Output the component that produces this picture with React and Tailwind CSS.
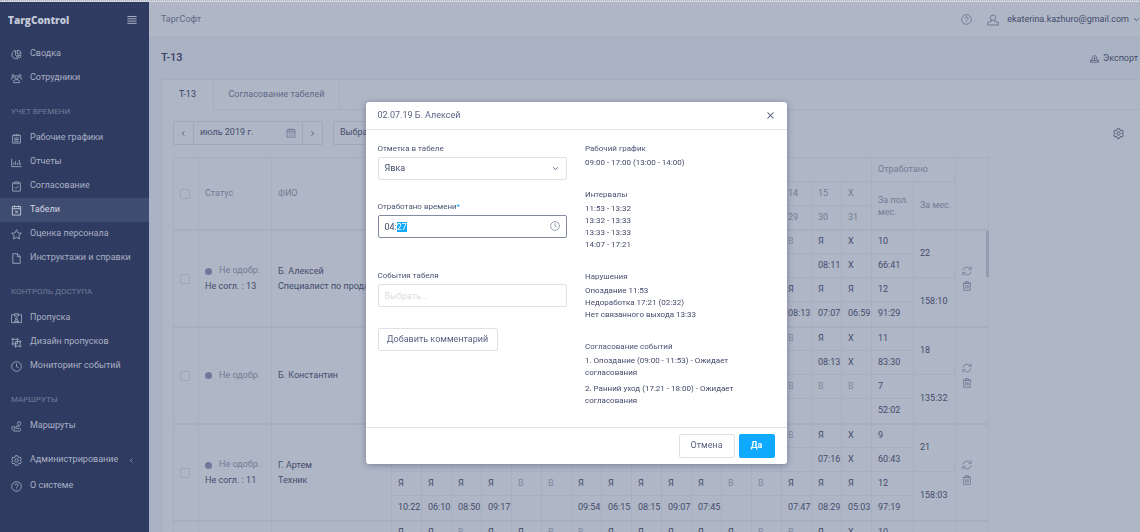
import { useEffect, useRef } from "react";

const ICONS = {
  pie: (
    <>
      <path d="M10 3.500a9 9 0 1 0 5 17" />
      <path d="M10 3.500V13l5 7.500" />
      <path d="M13.500 2.500a8.500 8.500 0 0 1 8.500 8h-8.500z" />
      <path d="M14 14h8a8 8 0 0 1-3.500 6z" />
    </>
  ),
  people: (
    <>
      <circle cx="12" cy="9" r="3.500" />
      <path d="M5.500 21v-2a5 5 0 0 1 5-4.500h3a5 5 0 0 1 5 4.500v2z" />
      <circle cx="4.500" cy="6" r="2.500" />
      <circle cx="19.500" cy="6" r="2.500" />
      <path d="M0 16v-2a4 4 0 0 1 5-3.500M24 16v-2a4 4 0 0 0-5-3.500" />
    </>
  ),
  schedule: (
    <>
      <path d="M3.500 5h17v17h-17z" />
      <path d="M8 2v5M12 2v5M16 2v5M7 11h10M7 14.500h10M7 18h10" />
    </>
  ),
  chart: (
    <>
      <path d="M1.500 4v17H23" />
      <path d="M6 17v-5M10 17V9M14 17v-4M18 17V6M21 17v-3" />
    </>
  ),
  clipboard: (
    <>
      <path d="M8 4H3.500v18h17V4H16" />
      <path d="M8 2h8v4H8zM8 13.500l3 3 5.500-6" />
    </>
  ),
  calendarX: (
    <>
      <path d="M3 3.500h18v18.500H3zM3 8h18" />
      <path d="M7.500 1v4M16.500 1v4M9 12l6 6M15 12l-6 6" />
    </>
  ),
  star: <path d="M12 1.500l3.200 6.900 7.300.9-5.400 5.100 1.400 7.400L12 18.100l-6.500 3.700 1.400-7.400L1.500 9.300l7.300-.9z" />,
  file: <path d="M14.500 1.500H4v21h16V7.500zM14 2v6h6" />,
  badge: (
    <>
      <path d="M8 4H1v17h22V4h-7" />
      <path d="M8 1.500h8v5H8z" />
      <circle cx="12" cy="12" r="2.200" />
      <path d="M7.500 18.500c.5-5 8.500-5 9 0z" />
    </>
  ),
  design: (
    <>
      <path d="M4 5h10v10H4zM10 10h10v10H10z" />
      <path d="M1 5h3M4 2v3M14 2v3h3M1 15h3v3M20 7v3h3M7 20h3v3M20 23v-3h3" />
    </>
  ),
  clock: (
    <>
      <circle cx="12" cy="12" r="10.500" />
      <path d="M12 5.500V12l4.500 3" />
    </>
  ),
  route: (
    <>
      <path d="M18 11s-3.500-3.500-3.500-6a3.500 3.500 0 0 1 7 0c0 2.500-3.500 6-3.500 6z" />
      <path d="M5 21s-3.500-3-3.500-5.500a3.500 3.500 0 0 1 7 0C8.500 18 5 21 5 21z" />
      <path d="M18 11h-5a2.300 2.300 0 0 0 0 5h6a3.300 3.300 0 0 1 0 6H6" />
    </>
  ),
  gear: (
    <>
      <path d="M9.500 1.500h5l.8 3 2 1.200 3-.9 2.300 4-2.100 2.200v2l2.100 2.200-2.300 4-3-.9-2 1.200-.8 3h-5l-.8-3-2-1.200-3 .9-2.300-4L3.500 13v-2L1.400 8.800l2.300-4 3 .9 2-1.200z" />
      <circle cx="12" cy="12" r="3.700" />
    </>
  ),
  help: (
    <>
      <circle cx="12" cy="12" r="10.500" />
      <path d="M8.800 9.300a3.200 3.200 0 1 1 4.700 2.900c-1 .6-1.500 1.100-1.500 2.300M12 16.800v1.700" />
    </>
  ),
  user: (
    <>
      <circle cx="12" cy="7.500" r="5.500" />
      <path d="M8.500 12v2.500L1.500 17v5h21v-5l-7-2.500V12" />
    </>
  ),
  exportIcon: (
    <>
      <path d="M6.500 13a6 6 0 1 1 11 0" />
      <path d="M12 7v8M9.500 12.500l2.500 2.500 2.500-2.500M6 13l-4.500 4v5h21v-5L18 13M2 17.500h20" />
    </>
  ),
  calendar: (
    <>
      <path d="M2.500 4h19v18h-19zM2.500 9h19" />
      <path d="M7 1v5M12 1v5M17 1v5M7 12.500h2.500M11 12.500h2.500M15 12.500h2.500M7 17h2.500M11 17h2.500M15 17h2.500" />
    </>
  ),
  refresh: (
    <>
      <path d="M2.500 10.500a9.800 9.800 0 0 1 17.500-4M21.500 13.500a9.800 9.800 0 0 1-17.500 4" />
      <path d="M22 1.500v6.500h-6.500M2 22.500V16h6.500" />
    </>
  ),
  trash: (
    <>
      <path d="M4 5.500h16v17H4zM2 5.500h20M8.500 5.500v-4h7v4" />
      <path d="M9 10v8M12 10v8M15 10v8" />
    </>
  ),
  left: <path d="M15 5l-7 7 7 7" />,
  right: <path d="M9 5l7 7-7 7" />,
  down: <path d="M4 8l8 8 8-8" />,
  close: <path d="M4 4l16 16M20 4L4 20" />,
  menu: <path d="M1 3.500h22M1 9h22M1 14.500h22M1 20h22" />,
};

function Icon({ name, className = "size-[11px]", stroke = 1.8 }) {
  return (
    <svg viewBox="0 0 24 24" className={`shrink-0 ${className}`} fill="none" stroke="currentColor" strokeWidth={stroke} aria-hidden="true">
      {ICONS[name]}
    </svg>
  );
}

function NavItem({ icon, label, active, arrow }) {
  return (
    <a
      href="#"
      className={`flex h-6 items-center gap-2 pl-[11px] pr-3.5 text-[9px] ${active ? "bg-[#3f4c71] text-[#d3d7e2]" : "text-[#a9b0c4]"}`}
    >
      <Icon name={icon} />
      <span className="flex-1 whitespace-nowrap">{label}</span>
      {arrow && <Icon name="left" className="size-[7px]" stroke={2.5} />}
    </a>
  );
}

function NavTitle({ children }) {
  return <h2 className="flex h-9 items-center pl-[11px] pt-2 text-[8px] uppercase text-[#717b99]">{children}</h2>;
}

function Sidebar() {
  return (
    <aside className="w-[149px] shrink-0 bg-[#303b61]">
      <div className="mb-1 flex h-9 items-center justify-between pl-2 pr-3 text-[#c3c9d8]">
        <span className="font-['Open_Sans',sans-serif] text-[10px] font-extrabold">TargControl</span>
        <button type="button" aria-label="Меню">
          <Icon name="menu" className="block size-[10px]" stroke={2} />
        </button>
      </div>
      <nav>
        <NavItem icon="pie" label="Сводка" />
        <NavItem icon="people" label="Сотрудники" />
        <NavTitle>Учет времени</NavTitle>
        <NavItem icon="schedule" label="Рабочие графики" />
        <NavItem icon="chart" label="Отчеты" />
        <NavItem icon="clipboard" label="Согласование" />
        <NavItem icon="calendarX" label="Табели" active />
        <NavItem icon="star" label="Оценка персонала" />
        <NavItem icon="file" label="Инструктажи и справки" />
        <NavTitle>Контроль доступа</NavTitle>
        <NavItem icon="badge" label="Пропуска" />
        <NavItem icon="design" label="Дизайн пропусков" />
        <NavItem icon="clock" label="Мониторинг событий" />
        <NavTitle>Маршруты</NavTitle>
        <NavItem icon="route" label="Маршруты" />
        <div className="mt-2.5 flex flex-col gap-0.5">
          <NavItem icon="gear" label="Администрирование" arrow />
          <NavItem icon="help" label="О системе" />
        </div>
      </nav>
    </aside>
  );
}

const blank = (n) => Array(n).fill("");

const PEOPLE = [
  {
    name: "Б. Алексей",
    job: "Специалист по продажам",
    note: "Не согл. : 13",
    rows: [
      [...blank(13), "В", "Я", "Х"],
      [...blank(14), "08:11", "Х"],
      [...blank(13), "Я", "Я", "Я"],
      [...blank(13), "08:13", "07:07", "06:59"],
    ],
    half: ["10", "66:41", "12", "91:29"],
    month: ["22", "158:10"],
  },
  {
    name: "Б. Константин",
    rows: [
      [...blank(13), "В", "Я", "Х"],
      [...blank(14), "08:13", "Х"],
      [...blank(13), "В", "В", "В"],
      blank(16),
    ],
    half: ["11", "83:30", "7", "52:02"],
    month: ["18", "135:32"],
  },
  {
    name: "Г. Артем",
    job: "Техник",
    note: "Не согл. : 11",
    rows: [
      [...blank(13), "В", "Я", "Х"],
      [...blank(14), "07:16", "Х"],
      ["Я", "Я", "Я", "Я", "В", "В", "Я", "Я", "Я", "Я", "Я", "В", "В", "Я", "Я", "Я"],
      ["10:22", "06:10", "08:50", "09:17", "", "", "09:54", "06:15", "08:15", "09:07", "07:45", "", "", "07:47", "08:29", "05:03"],
    ],
    half: ["9", "60:43", "12", "97:19"],
    month: ["21", "158:03"],
  },
  {
    name: "",
    rows: [["Я", "Я", "В", "Я", "Я", "В", "В", "Я", "Я", "Я", "Я", "Я", "В", "В", "Я", "Х"], blank(16), blank(16), blank(16)],
    half: ["10", "", "", ""],
    month: ["", ""],
  },
];

const DAYS = [
  [...blank(13), "14", "15", "Х"],
  [...blank(13), "29", "30", "31"],
];

const CELL = "border-l border-t border-[#a4afc0] pl-1.5";
const HEAD = `${CELL} text-left font-normal text-[#747b94]`;

function Box({ label }) {
  return (
    <input
      type="checkbox"
      aria-label={label}
      className="block size-2.5 appearance-none rounded-[2px] border border-[#9ca6b8]"
    />
  );
}

function Person({ person }) {
  return person.rows.map((days, r) => {
    const top = r === 0 ? "border-t-2" : "";
    return (
      <tr key={r} className={r === 3 ? "h-[25px]" : "h-6"}>
        {r === 0 && (
          <>
            <td rowSpan={4} className={`${CELL} border-t-2`}>
              <Box label={`Выбрать ${person.name}`} />
            </td>
            <td rowSpan={4} className={`${CELL} border-t-2`}>
              {person.name && (
                <>
                  <div className="flex h-[15px] items-center gap-[7px] text-[#747b94]">
                    <span className="size-[7px] rounded-full bg-[#70779a]" />
                    Не одобр.
                  </div>
                  <div className="leading-[15px]">{person.note}</div>
                </>
              )}
            </td>
            <td rowSpan={4} className={`${CELL} overflow-hidden whitespace-nowrap border-t-2 leading-[15px]`}>
              {person.name}
              <div>{person.job}</div>
            </td>
          </>
        )}
        {days.map((d, i) => (
          <td key={i} className={`${CELL} ${top} ${d === "В" ? "text-[#81889d]" : ""}`}>
            {d}
          </td>
        ))}
        <td className={`${CELL} ${top}`}>{person.half[r]}</td>
        {r % 2 === 0 && (
          <td rowSpan={2} className={`${CELL} ${top}`}>
            {person.month[r / 2]}
          </td>
        )}
        {r === 0 && (
          <td rowSpan={4} className={`${CELL} border-r border-t-2 text-[#6b7290]`}>
            {person.name && (
              <div className="flex flex-col items-start gap-[5px]">
                <button type="button" aria-label="Обновить">
                  <Icon name="refresh" className="block size-[10px]" />
                </button>
                <button type="button" aria-label="Удалить">
                  <Icon name="trash" className="block size-[10px]" />
                </button>
              </div>
            )}
          </td>
        )}
      </tr>
    );
  });
}

function Timesheet() {
  return (
    <div className="relative mt-3 w-[816px]">
      <table className="w-full table-fixed border-separate border-spacing-0 text-[#454c6c]">
        <colgroup>
          <col className="w-[25px]" />
          <col className="w-[73px]" />
          <col className="w-[120px]" />
          {blank(16).map((_, i) => (
            <col key={i} className="w-[30px]" />
          ))}
          <col className="w-[42px]" />
          <col className="w-[42px]" />
          <col />
        </colgroup>
        <thead>
          <tr className="h-6">
            <th rowSpan={3} className={HEAD}>
              <Box label="Выбрать всех" />
            </th>
            <th rowSpan={3} className={HEAD}>Статус</th>
            <th rowSpan={3} className={HEAD}>ФИО</th>
            <th colSpan={16} className={HEAD} />
            <th colSpan={2} className={HEAD}>Отработано</th>
            <th rowSpan={3} className={`${HEAD} border-r`} />
          </tr>
          <tr className="h-6">
            {DAYS[0].map((d, i) => (
              <th key={i} className={HEAD}>{d}</th>
            ))}
            <th rowSpan={2} className={`${HEAD} leading-3`}>
              За пол.
              <br />
              мес.
            </th>
            <th rowSpan={2} className={HEAD}>За мес.</th>
          </tr>
          <tr className="h-6">
            {DAYS[1].map((d, i) => (
              <th key={i} className={HEAD}>{d}</th>
            ))}
          </tr>
        </thead>
        <tbody>
          {PEOPLE.map((p, i) => (
            <Person key={i} person={p} />
          ))}
        </tbody>
      </table>
      <div className="absolute right-0 top-[74px] h-[46px] w-[3px] bg-[#949cb0]" />
    </div>
  );
}

const PICKER = "flex h-6 items-center rounded-[2px] border border-[#9fa9bb]";

function Page() {
  return (
    <main className="min-w-0 flex-1 overflow-hidden bg-[#aab3c4] text-[#454c6c]">
      <header className="flex h-9 items-center border-b border-[#a6b0c1] bg-[#afb6c6] pl-3">
        <span className="flex-1 text-[9px] text-[#626987]">ТаргСофт</span>
        <button type="button" aria-label="Справка" className="mr-[15px] text-[#626987]">
          <Icon name="help" className="block size-[11px]" stroke={1.6} />
        </button>
        <button type="button" className="flex items-center gap-2 text-[9px]">
          <Icon name="user" className="size-[12px] text-[#626987]" stroke={1.6} />
          ekaterina.kazhuro@gmail.com
          <Icon name="down" className="-ml-1 size-[7px]" stroke={3} />
        </button>
      </header>
      <div className="flex h-[41px] items-center justify-between pl-3 pr-0.5">
        <h1 className="text-[11px] font-medium text-[#3b4267]">Т-13</h1>
        <button type="button" className="flex items-center gap-1 text-[9px]">
          <Icon name="exportIcon" className="size-[9px]" />
          Экспорт
        </button>
      </div>
      <section className="ml-3 border-l border-t border-[#a4aec0] bg-[#afb6c6]">
        <div className="flex h-[30px] text-[9px]">
          <button type="button" className="w-[51px] text-[#3b4267]">Т-13</button>
          <button type="button" className="w-[127px] border-x border-b border-[#a4aec0] text-[#626987]">
            Согласование табелей
          </button>
          <div className="flex-1 border-b border-[#a4aec0]" />
        </div>
        <div className="pl-[11px] pt-[11px] text-[9px]">
          <div className="flex items-center gap-2.5 pr-4">
            <div className={PICKER}>
              <button type="button" aria-label="Назад" className="px-1.5">
                <Icon name="left" className="block size-[7px]" stroke={3} />
              </button>
              <button type="button" className="flex h-full w-[110px] items-center justify-between border-x border-[#9fa9bb] px-1.5">
                июль 2019 г.
                <Icon name="calendar" className="size-[10px] text-[#6b7290]" />
              </button>
              <button type="button" aria-label="Вперед" className="px-1.5">
                <Icon name="right" className="block size-[7px]" stroke={3} />
              </button>
            </div>
            <button type="button" className={`${PICKER} w-[120px] px-1.5`}>Выбрать</button>
            <button type="button" aria-label="Настройки" className="ml-auto">
              <Icon name="gear" className="block size-[11px]" />
            </button>
          </div>
          <Timesheet />
        </div>
      </section>
    </main>
  );
}

const FIELD = "block h-[23px] w-full appearance-none rounded-[2px] border bg-white px-1.5 text-[9px] outline-none";
const LABEL = "mb-0.5 block text-[8px] leading-3 text-[#4c5373]";

function InfoBlock({ title, lines, className = "" }) {
  return (
    <section>
      <h3 className={LABEL}>{title}</h3>
      <div className={`flex flex-col text-[8px] leading-3 text-[#434a6b] ${className}`}>
        {lines.map((line, i) => (
          <p key={i}>{line}</p>
        ))}
      </div>
    </section>
  );
}

function Dialog() {
  const timeRef = useRef(null);
  useEffect(() => {
    timeRef.current.focus();
    timeRef.current.setSelectionRange(3, 5);
  }, []);

  return (
    <div className="fixed inset-0 flex items-start justify-center pl-3 pt-[102px]">
      <div
        role="dialog"
        aria-labelledby="dialog-title"
        className="w-[421px] rounded-[3px] bg-white shadow-[0_1px_6px_rgba(50,60,95,0.45)]"
      >
        <header className="flex h-7 items-center justify-between border-b border-[#e4e5ea] px-3">
          <h2 id="dialog-title" className="text-[9px] text-[#5c6382]">02.07.19 Б. Алексей</h2>
          <button type="button" aria-label="Закрыть" className="text-[#4c5373]">
            <Icon name="close" className="block size-[9px]" stroke={2.8} />
          </button>
        </header>
        <div className="grid grid-cols-2 gap-[18px] px-3 pb-5 pt-[13px]">
          <form>
            <label htmlFor="mark" className={LABEL}>Отметка в табеле</label>
            <div className="relative">
              <select id="mark" className={`${FIELD} border-[#dfe1e7] text-[#434a6b]`}>
                <option>Явка</option>
              </select>
              <Icon name="down" className="pointer-events-none absolute right-2 top-2 size-[7px] text-[#4c5373]" stroke={3} />
            </div>
            <label htmlFor="time" className={`${LABEL} mt-[21px]`}>
              Отработано времени<span className="text-[#0fa9ff]">*</span>
            </label>
            <div className="relative">
              <input
                id="time"
                ref={timeRef}
                defaultValue="04:27"
                className={`${FIELD} border-[#8289a3] text-[#434a6b] selection:bg-[#0fa9ff] selection:text-white`}
              />
              <Icon name="clock" className="pointer-events-none absolute right-[7px] top-1.5 size-[10px] text-[#777e99]" />
            </div>
            <label htmlFor="events" className={`${LABEL} mt-8`}>События табеля</label>
            <input
              id="events"
              placeholder="Выбрать..."
              className={`${FIELD} border-[#dfe1e7] placeholder:text-[#d9dbe1] placeholder:opacity-100`}
            />
            <button type="button" className="mt-[21px] block h-[23px] w-[120px] rounded-[2px] border border-[#dfe1e7] text-[9px] text-[#5c6382]">
              Добавить комментарий
            </button>
          </form>
          <div className="flex flex-col gap-5">
            <InfoBlock title="Рабочий график" lines={["09:00 - 17:00 (13:00 - 14:00)"]} />
            <InfoBlock title="Интервалы" lines={["11:53 - 13:32", "13:32 - 13:33", "13:33 - 13:33", "14:07 - 17:21"]} />
            <InfoBlock title="Нарушения" lines={["Опоздание 11:53", "Недоработка 17:21 (02:32)", "Нет связанного выхода 13:33"]} />
            <InfoBlock
              title="Согласование событий"
              className="gap-1"
              lines={["1. Опоздание (09:00 - 11:53) - Ожидает согласования", "2. Ранний уход (17:21 - 18:00) - Ожидает согласования"]}
            />
          </div>
        </div>
        <footer className="flex justify-end gap-1 border-t border-[#e4e5ea] px-3 py-1.5 text-[9px]">
          <button type="button" className="h-6 w-14 rounded-[2px] border border-[#dfe1e7] text-[#5c6382]">Отмена</button>
          <button type="button" className="h-6 w-9 rounded-[2px] bg-[#0fa9ff] font-bold text-white">Да</button>
        </footer>
      </div>
    </div>
  );
}

export default function App() {
  return (
    <div className="flex h-screen flex-col overflow-hidden font-[Roboto,sans-serif]">
      <div className="shrink-0 border-t border-dotted border-[#a9aeba] bg-[#d5d8de] pb-px" />
      <div className="flex min-h-0 flex-1">
        <Sidebar />
        <Page />
      </div>
      <Dialog />
    </div>
  );
}
